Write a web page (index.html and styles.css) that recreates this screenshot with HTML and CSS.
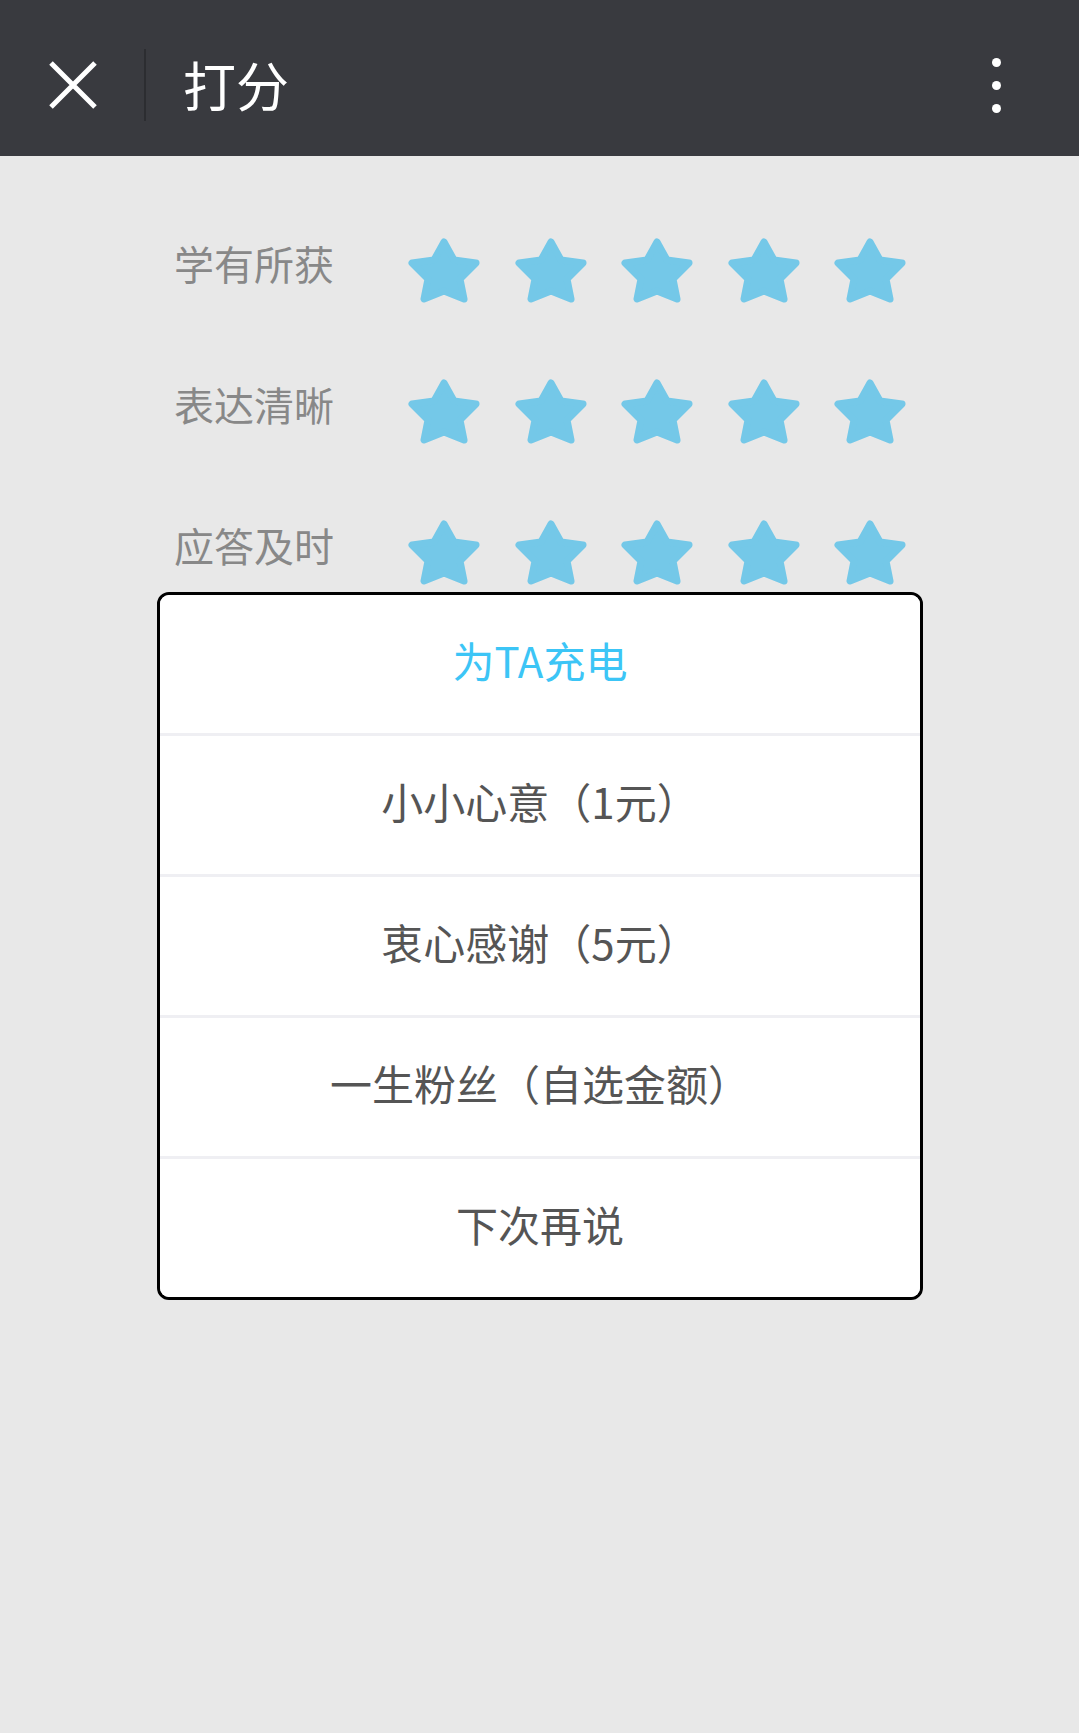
FILE: index.html
```html
<!DOCTYPE html>
<html lang="zh">
<head>
<meta charset="utf-8">
<title>打分</title>
<link rel="stylesheet" href="styles.css">
</head>
<body>
<div class="page">
  <header class="topbar">
    <div class="close">
      <svg width="48" height="48" viewBox="0 0 48 48"><path d="M2 2 L46 46 M46 2 L2 46" stroke="#fff" stroke-width="5" fill="none"/></svg>
    </div>
    <div class="divider"></div>
    <div class="title">打分</div>
    <div class="more"><span></span><span></span><span></span></div>
  </header>

  <main class="ratings">
    <div class="row">
      <div class="label">学有所获</div>
      <div class="stars">
        <svg class="star" viewBox="0 0 72 65"><polygon points="36,4 46,22 68,25 52,41 56,61 36,53 16,61 20,41 4,25 26,22"/></svg>
        <svg class="star" viewBox="0 0 72 65"><polygon points="36,4 46,22 68,25 52,41 56,61 36,53 16,61 20,41 4,25 26,22"/></svg>
        <svg class="star" viewBox="0 0 72 65"><polygon points="36,4 46,22 68,25 52,41 56,61 36,53 16,61 20,41 4,25 26,22"/></svg>
        <svg class="star" viewBox="0 0 72 65"><polygon points="36,4 46,22 68,25 52,41 56,61 36,53 16,61 20,41 4,25 26,22"/></svg>
        <svg class="star" viewBox="0 0 72 65"><polygon points="36,4 46,22 68,25 52,41 56,61 36,53 16,61 20,41 4,25 26,22"/></svg>
      </div>
    </div>
    <div class="row">
      <div class="label">表达清晰</div>
      <div class="stars">
        <svg class="star" viewBox="0 0 72 65"><polygon points="36,4 46,22 68,25 52,41 56,61 36,53 16,61 20,41 4,25 26,22"/></svg>
        <svg class="star" viewBox="0 0 72 65"><polygon points="36,4 46,22 68,25 52,41 56,61 36,53 16,61 20,41 4,25 26,22"/></svg>
        <svg class="star" viewBox="0 0 72 65"><polygon points="36,4 46,22 68,25 52,41 56,61 36,53 16,61 20,41 4,25 26,22"/></svg>
        <svg class="star" viewBox="0 0 72 65"><polygon points="36,4 46,22 68,25 52,41 56,61 36,53 16,61 20,41 4,25 26,22"/></svg>
        <svg class="star" viewBox="0 0 72 65"><polygon points="36,4 46,22 68,25 52,41 56,61 36,53 16,61 20,41 4,25 26,22"/></svg>
      </div>
    </div>
    <div class="row">
      <div class="label">应答及时</div>
      <div class="stars">
        <svg class="star" viewBox="0 0 72 65"><polygon points="36,4 46,22 68,25 52,41 56,61 36,53 16,61 20,41 4,25 26,22"/></svg>
        <svg class="star" viewBox="0 0 72 65"><polygon points="36,4 46,22 68,25 52,41 56,61 36,53 16,61 20,41 4,25 26,22"/></svg>
        <svg class="star" viewBox="0 0 72 65"><polygon points="36,4 46,22 68,25 52,41 56,61 36,53 16,61 20,41 4,25 26,22"/></svg>
        <svg class="star" viewBox="0 0 72 65"><polygon points="36,4 46,22 68,25 52,41 56,61 36,53 16,61 20,41 4,25 26,22"/></svg>
        <svg class="star" viewBox="0 0 72 65"><polygon points="36,4 46,22 68,25 52,41 56,61 36,53 16,61 20,41 4,25 26,22"/></svg>
      </div>
    </div>
  </main>

  <div class="dialog">
    <div class="item item-title">为TA充电</div>
    <div class="item">小小心意（1元）</div>
    <div class="item">衷心感谢（5元）</div>
    <div class="item">一生粉丝（自选金额）</div>
    <div class="item">下次再说</div>
  </div>
</div>
</body>
</html>
```

FILE: styles.css
```css
html, body {
  margin: 0;
  padding: 0;
  background: #e8e8e8;
}
body {
  font-family: "Noto Sans CJK SC", "Noto Sans", sans-serif;
}
.page {
  position: relative;
  width: 1079px;
  height: 1733px;
  background: #e8e8e8;
}
.topbar {
  height: 156px;
  background: #393a3f;
  display: flex;
  align-items: center;
}
.close {
  width: 48px;
  height: 48px;
  margin-left: 49px;
  margin-top: 14px;
}
.close svg { display: block; }
.divider {
  width: 2px;
  height: 72px;
  background: #2c2d31;
  margin-left: 47px;
  margin-top: 14px;
}
.title {
  margin-left: 37px;
  color: #fff;
  font-size: 53px;
  line-height: 53px;
  margin-top: 12px;
}
.more {
  margin-left: auto;
  margin-right: 78px;
  display: flex;
  flex-direction: column;
  gap: 14px;
  margin-top: 14px;
}
.more span {
  width: 9px;
  height: 9px;
  border-radius: 50%;
  background: #fff;
}
.ratings {
  padding-top: 82px;
  padding-left: 174px;
  display: flex;
  flex-direction: column;
  gap: 76px;
}
.row {
  display: flex;
  align-items: flex-start;
  height: 65px;
}
.label {
  width: 160px;
  font-size: 40px;
  line-height: 40px;
  color: #888;
  padding-top: 5px;
}
.stars {
  margin-left: 74px;
  display: flex;
  gap: 34.5px;
}
.star {
  width: 72px;
  height: 65px;
  display: block;
}
.star polygon {
  fill: #74c8e8;
  stroke: #74c8e8;
  stroke-width: 7;
  stroke-linejoin: round;
}
.dialog {
  position: absolute;
  left: 157px;
  top: 592px;
  width: 760px;
  background: #efeff3;
  border: 3px solid #000;
  border-radius: 12px;
  overflow: hidden;
  display: flex;
  flex-direction: column;
  gap: 3px;
}
.item {
  height: 128px;
  padding-bottom: 10px;
  background: #fff;
  display: flex;
  align-items: center;
  justify-content: center;
  font-size: 42px;
  color: #555;
}
.item-title {
  color: #3cc5f6;
  height: 128px;
}
```
